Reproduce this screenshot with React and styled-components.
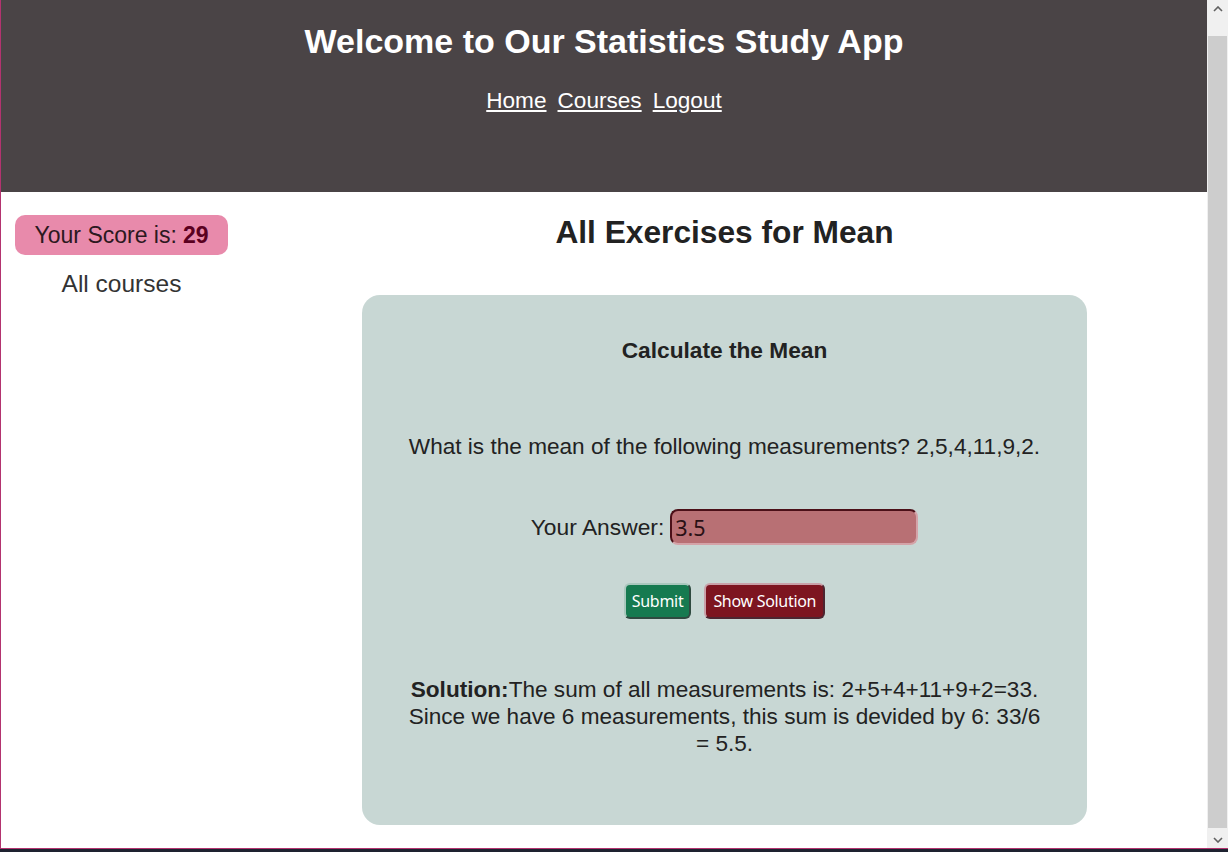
import React from "react";
import styled, { createGlobalStyle } from "styled-components";

const Global = createGlobalStyle`
  html, body { margin: 0; padding: 0; overflow: hidden; }
  body { font-family: "Liberation Sans", Arial, sans-serif; background: #1e2230; }
  * { box-sizing: border-box; }
`;

const Frame = styled.div`
  width: 1228px;
  height: 852px;
  display: flex;
  flex-direction: column;
  background: #1e2230;
`;

const Window = styled.div`
  flex: 1;
  display: flex;
  min-height: 0;
  border-left: 1px solid #b3336f;
  border-bottom: 1px solid #b3336f;
`;

const Page = styled.div`
  flex: 1;
  background: #ffffff;
  display: flex;
  flex-direction: column;
  overflow: hidden;
`;

const Header = styled.header`
  height: 192px;
  flex: none;
  background: #4a4446;
  padding-top: 22px;
  display: flex;
  flex-direction: column;
  align-items: center;
`;

const Title = styled.h1`
  margin: 0;
  font-size: 34px;
  line-height: 39px;
  font-weight: 700;
  color: #ffffff;
`;

const Nav = styled.nav`
  margin-top: 27px;
  display: flex;
  gap: 11px;
`;

const NavLink = styled.a`
  font-size: 22.6px;
  line-height: 26px;
  color: #ffffff;
  text-decoration: underline;
  text-underline-offset: 2px;
  cursor: pointer;
`;

const Body = styled.div`
  flex: 1;
  display: flex;
`;

const Sidebar = styled.aside`
  width: 241px;
  flex: none;
  padding-top: 23px;
  display: flex;
  flex-direction: column;
  align-items: center;
`;

const ScorePill = styled.div`
  height: 40px;
  padding: 0 20px;
  border-radius: 10px;
  background: #e88aab;
  display: flex;
  align-items: center;
  font-size: 23px;
  color: #2c1820;
`;

const ScoreValue = styled.b`
  color: #5a0020;
  margin-left: 6px;
`;

const SideLink = styled.div`
  margin-top: 15px;
  font-size: 24.5px;
  line-height: 27px;
  color: #333333;
`;

const Main = styled.main`
  flex: 1;
  padding-top: 22px;
  display: flex;
  flex-direction: column;
  align-items: center;
`;

const PageHeading = styled.h2`
  margin: 0;
  font-size: 31.7px;
  line-height: 36px;
  font-weight: 700;
  color: #222222;
`;

const Card = styled.section`
  margin-top: 45px;
  width: 725px;
  height: 530px;
  border-radius: 18px;
  background: #c8d7d4;
  padding: 42px 40px 0;
  display: flex;
  flex-direction: column;
  align-items: center;
  text-align: center;
  color: #222222;
`;

const CardTitle = styled.h3`
  margin: 0;
  font-size: 22.7px;
  line-height: 26px;
  font-weight: 700;
`;

const Question = styled.p`
  margin: 72px 0 0;
  font-size: 22.6px;
  line-height: 24px;
`;

const AnswerRow = styled.div`
  margin-top: 50px;
  display: flex;
  align-items: center;
  gap: 6px;
  font-size: 22.8px;
`;

const AnswerInput = styled.input`
  width: 248px;
  height: 36px;
  border-radius: 8px;
  border: 2px solid;
  border-color: #4b1018 #d4a3a8 #d4a3a8 #4b1018;
  background: #b87074;
  padding: 0 3px;
  font-family: "Noto Sans", "DejaVu Sans", sans-serif;
  font-size: 21.5px;
  color: #2a1015;
  outline: none;
`;

const ButtonRow = styled.div`
  margin-top: 38px;
  display: flex;
  gap: 13px;
`;

const Button = styled.button`
  height: 36px;
  padding: 0 ${(p) => (p.$tone === "green" ? "6px" : "7px")};
  border-radius: 6px;
  border: 2px solid;
  font-family: "Noto Sans", "DejaVu Sans", sans-serif;
  font-size: 16px;
  letter-spacing: -0.3px;
  color: #ffffff;
  cursor: pointer;
  background: ${(p) => (p.$tone === "green" ? "#167a50" : "#7d1520")};
  border-color: ${(p) =>
    p.$tone === "green"
      ? "#a9c7bd #2f4a40 #2f4a40 #a9c7bd"
      : "#c9a0a8 #4d2530 #4d2530 #c9a0a8"};
`;

const Solution = styled.p`
  margin: 57px 0 0;
  width: 645px;
  font-size: 22.6px;
  line-height: 27px;
`;

const Scrollbar = styled.div`
  width: 21px;
  flex: none;
  background: #f0f0f0;
  display: flex;
  flex-direction: column;
  align-items: center;
`;

const Arrow = styled.div`
  height: 17px;
  width: 100%;
  display: flex;
  align-items: center;
  justify-content: center;
`;

const Thumb = styled.div`
  width: 19px;
  margin: 19px 1px 3px 0;
  align-self: flex-start;
  margin-left: 1px;
  flex: 1;
  background: #cdcdcd;
`;

const StatusBar = styled.div`
  height: 3px;
  flex: none;
  background: #1e2230;
`;

const Chevron = ({ down }) => (
  <svg width="10" height="6" viewBox="0 0 10 6">
    <path
      d={down ? "M1 1 L5 5 L9 1" : "M1 5 L5 1 L9 5"}
      fill="none"
      stroke="#606060"
      strokeWidth="1.6"
    />
  </svg>
);

export default function App() {
  return (
    <Frame>
      <Global />
      <Window>
        <Page>
          <Header>
            <Title>Welcome to Our Statistics Study App</Title>
            <Nav>
              <NavLink>Home</NavLink>
              <NavLink>Courses</NavLink>
              <NavLink>Logout</NavLink>
            </Nav>
          </Header>
          <Body>
            <Sidebar>
              <ScorePill>
                Your Score is:<ScoreValue>29</ScoreValue>
              </ScorePill>
              <SideLink>All courses</SideLink>
            </Sidebar>
            <Main>
              <PageHeading>All Exercises for Mean</PageHeading>
              <Card>
                <CardTitle>Calculate the Mean</CardTitle>
                <Question>
                  What is the mean of the following measurements? 2,5,4,11,9,2.
                </Question>
                <AnswerRow>
                  <span>Your Answer:</span>
                  <AnswerInput defaultValue="3.5" />
                </AnswerRow>
                <ButtonRow>
                  <Button $tone="green">Submit</Button>
                  <Button $tone="red">Show Solution</Button>
                </ButtonRow>
                <Solution>
                  <b>Solution:</b>The sum of all measurements is: 2+5+4+11+9+2=33.
                  Since we have 6 measurements, this sum is devided by 6: 33/6 = 5.5.
                </Solution>
              </Card>
            </Main>
          </Body>
        </Page>
        <Scrollbar>
          <Arrow>
            <Chevron />
          </Arrow>
          <Thumb />
          <Arrow>
            <Chevron down />
          </Arrow>
        </Scrollbar>
      </Window>
      <StatusBar />
    </Frame>
  );
}
